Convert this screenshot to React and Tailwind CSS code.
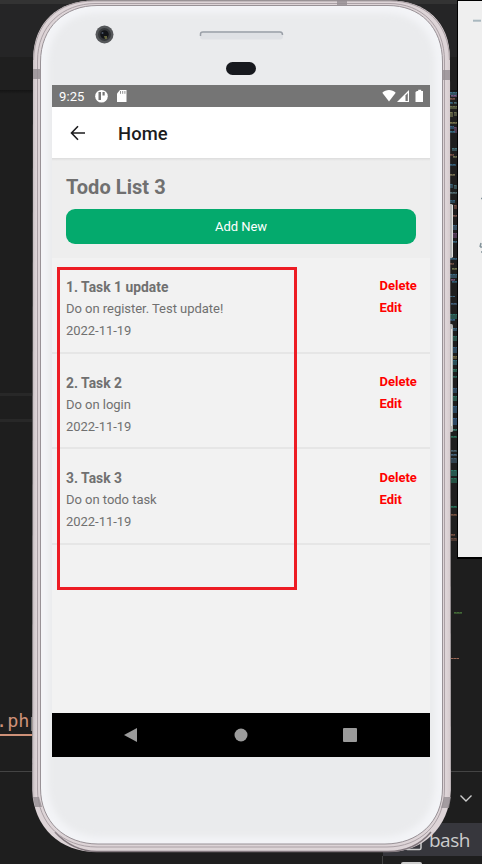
import React from "react";

const tasks = [
  { id: 1, title: "Task 1 update", note: "Do on register. Test update!", date: "2022-11-19" },
  { id: 2, title: "Task 2", note: "Do on login", date: "2022-11-19" },
  { id: 3, title: "Task 3", note: "Do on todo task", date: "2022-11-19" },
];

// Minimap rows of the editor: [x, y, width, height, colour]
const minimap = [
  [450, 92, 7, 3, "#3c6f83"], [451, 95, 6, 2, "#765a86"], [450, 98, 5, 2, "#765347"],
  [450, 102, 3, 2, "#386782"], [454, 102, 3, 2, "#4a6b73"], [450, 106, 7, 3, "#69704d"], [450, 112, 3, 5, "#777852"], [454, 112, 3, 4, "#686c50"],
  [450, 122, 7, 2, "#79764e"], [450, 126, 4, 3, "#355f82"], [454, 127, 3, 6, "#654a6b"], [450, 131, 5, 2, "#376b82"],
  [452, 148, 5, 3, "#456d75"], [450, 154, 4, 2, "#754e43"], [453, 156, 4, 2, "#707052"],
  [450, 164, 6, 2, "#35617d"], [450, 174, 5, 2, "#777051"], [450, 184, 3, 4, "#396378"], [454, 185, 3, 4, "#43676d"],
  [450, 192, 7, 2, "#536d73"], [450, 200, 5, 3, "#315d75"], [454, 205, 3, 4, "#734d43"], [453, 215, 4, 2, "#75534a"],
  [453, 225, 4, 5, "#41647d"], [453, 233, 4, 5, "#67466b"], [453, 241, 4, 2, "#3a657b"],
  [450, 258, 7, 2, "#356078"], [450, 263, 4, 2, "#715044"], [452, 268, 5, 2, "#6d714d"], [450, 274, 7, 4, "#3c6780"], [451, 279, 4, 2, "#745075"], [452, 281, 5, 2, "#315f76"],
  [450, 296, 5, 1, "#3e6680"], [451, 303, 6, 2, "#405d78"], [450, 314, 7, 5, "#2f7167"], [450, 319, 5, 2, "#356383"],
  [453, 328, 4, 3, "#3b647c"], [453, 336, 4, 5, "#2f6b60"], [453, 347, 4, 6, "#355e7b"], [453, 356, 4, 3, "#756b43"], [453, 360, 4, 5, "#316b7a"],
  [453, 369, 4, 3, "#2d725e"], [453, 376, 4, 2, "#2d665b"], [453, 388, 4, 5, "#355b78"], [453, 396, 4, 5, "#317564"],
  [453, 406, 4, 7, "#345f82"], [453, 418, 4, 7, "#37618a"], [453, 429, 4, 2, "#38796c"], [451, 436, 6, 2, "#2b7059"],
  [451, 450, 6, 2, "#48616f"], [451, 454, 6, 2, "#46627b"], [451, 458, 6, 5, "#3d586a"], [451, 470, 6, 6, "#2c7868"],
  [451, 478, 6, 5, "#286e58"], [451, 506, 6, 2, "#267058"], [451, 514, 6, 2, "#77513f"], [451, 534, 4, 2, "#795142"], [451, 538, 6, 3, "#65483d"],
  [454, 612, 8, 2, "#436b37"], [451, 658, 8, 1, "#9a6857"],
];

function Desktop() {
  return (
    <>
      <div className="absolute inset-0 flex flex-col bg-[#1e1e1e]">
        <div className="h-1 bg-[#333333]" />
        <div className="h-[53px] bg-[#252526]" />
        <div className="h-[33px] bg-[#1f1f1f]" />
        <div className="h-1 bg-gradient-to-b from-[#141414] to-[#1e1e1e]" />
        <div className="mt-[299px] h-[3px] w-8 bg-[#282828]" />
        <div className="mt-[23px] h-[3px] w-8 bg-[#282828]" />
        <div className="mt-[286px] h-[28px] w-12 border-b-2 border-[#ce9178] font-['DejaVu_Sans_Mono',monospace] text-[18.500px] leading-[26px] text-[#ce9178] whitespace-nowrap">
          <span className="-ml-[4px]">.php</span>
        </div>
        <div className="mt-[35px] h-px bg-[#444444]" />
        <div className="mt-[51px] ml-[383px] flex h-[33px] items-center bg-[#37373d] pt-px pl-[46px] font-['Open_Sans',sans-serif] text-[19px] tracking-[-0.500px] text-[#cccccc]">
          bash
        </div>
        <div className="ml-[382px] h-2 border-l border-[#444444]" />
      </div>
      <svg className="absolute inset-0" width="482" height="864" viewBox="0 0 482 864">
        {minimap.map(([x, y, w, h, c], i) => (
          <g key={i}>
            <rect x={x} y={y} width={w} height={h} fill={c} opacity=".65" />
            <path d={`M${x} ${y + 0.5}h${w}`} stroke={c} strokeDasharray="2 1" />
          </g>
        ))}
        <path d="M460.5 795.5l5.5 5.5 5.5-5.5" fill="none" stroke="#cccccc" strokeWidth="1.4" />
        <rect x="406" y="835" width="15" height="14.500" rx="1.5" fill="none" stroke="#cccccc" strokeWidth="1.5" />
        <rect x="401" y="862" width="21" height="8" rx="2" fill="#cccccc" />
      </svg>
      <div className="absolute top-0 left-[457px] h-[559px] w-10 border-2 border-t border-l border-black bg-[#efefef]">
        <svg width="24" height="556" viewBox="458 1 24 556">
          <path d="M473 20.7h8" stroke="#a9b8bf" strokeWidth="2" />
          <path d="M481 198.500h2M481 243l-1 4M480 247h3M481 252h2" stroke="#84949b" strokeWidth="1.500" />
        </svg>
      </div>
    </>
  );
}

function PhoneShell() {
  return (
    <svg className="absolute inset-0" width="482" height="864" viewBox="0 0 482 864">
      <defs>
        <linearGradient id="side" x1="32" x2="451" y1="0" y2="0" gradientUnits="userSpaceOnUse">
          <stop offset="0" stopColor="#918b8f" />
          <stop offset=".004" stopColor="#d0c7ca" />
          <stop offset=".011" stopColor="#ddd4d7" />
          <stop offset=".989" stopColor="#ddd4d7" />
          <stop offset=".997" stopColor="#d5cbce" />
          <stop offset="1" stopColor="#a9a1a5" />
        </linearGradient>
        <filter id="soft" x="-5%" y="-5%" width="110%" height="110%">
          <feGaussianBlur stdDeviation="3" />
        </filter>
        <clipPath id="face"><path d="M97 6H388C420 6 442 27 442 62V788C442 822 418 843.500 385 843.500H98C65 843.500 41 822 41 788V62C41 27 65 6 97 6Z" /></clipPath>
      </defs>
      <rect x="448" y="204" width="5" height="54" rx="1.500" fill="#b3b4b3" />
      <path d="M452.500 205v52" stroke="#e0e1df" />
      <rect x="448" y="324" width="5" height="108" rx="1.500" fill="#b3b4b3" />
      <path d="M451.500 329v97" stroke="#e0e1df" />
      <path d="M94 .5H390C426 .5 449.500 22 450 58L451 790C449 828 423 852 388 852H97C60 852 34 828 32 790L33 58C34 22 58 .5 94 .5Z" fill="url(#side)" />
      <path d="M55 832C67 845 80 851.500 97 851.500H388C405 851.500 420 845 431 832" fill="none" stroke="#81777d" strokeWidth="1.500" />
      <path d="M33.500 60C34.500 23 58 1 94 1H390C425 1 449 23 449.500 60" fill="none" stroke="#aaa0a4" />
      <path d="M96 3.500H389C422 3.500 444.500 26 444.500 61V789C444.500 824 420 847 387 847H97C63 847 37.500 824 37.500 789V61C37.500 26 62 3.500 96 3.500Z" fill="none" stroke="#aba1a6" />
      <path d="M97 5.500H388C420 5.500 442.500 27 442.500 62V788C442.500 822 418 844 385 844H98C65 844 40.500 822 40.500 788V62C40.500 27 65 5.500 97 5.500Z" fill="#f3f4f7" stroke="#989196" />
      <g clipPath="url(#face)">
        <path d="M98 13H384C415 13 435 33 435 64V783C435 815 414 837 382 837H100C69 837 48 815 48 783V64C48 33 68 13 98 13Z" fill="#eaebed" filter="url(#soft)" />
      </g>
      <path d="M33 69h7v10h-7zM443 70h7v10h-7zM337 0h10v5h-10zM33 797h6l3 10h-7zM444 797h7l-2 11h-8z" fill="#958d92" opacity=".8" />
      <circle cx="104.500" cy="34.500" r="9" fill="#55575a" />
      <circle cx="104.500" cy="34.500" r="6.500" fill="#36383b" />
      <circle cx="104.500" cy="34.500" r="4.200" fill="#121418" />
      <path d="M104 36h3v3h-2z" fill="#64643c" />
      <circle cx="102.500" cy="33" r="1" fill="#4c5668" />
      <rect x="200" y="31" width="83" height="8.500" rx="3" fill="#dfe1e5" />
      <path d="M200.500 36V34Q200.500 32 203 32H280Q282.500 32 282.500 35" fill="none" stroke="#9ba0a8" strokeWidth="1.500" />
      <rect x="226" y="62" width="30" height="13" rx="6.500" fill="#17191e" />
    </svg>
  );
}

function StatusBar() {
  return (
    <div className="flex h-[22px] shrink-0 items-center bg-[#757575] pl-[7px] text-white">
      <span className="w-[36px] pt-px text-[13px] leading-[22px] tracking-[0.1px]">9:25</span>
      <svg width="335" height="22" viewBox="95 85 335 22" fill="#fff">
        <circle cx="101.500" cy="96.200" r="6.300" />
        <path d="M98.500 92h2.500v8h-2.500zM102.500 92h2.200v3.500h-2.200z" fill="#757575" />
        <path d="M120 90H126.500V102H117V93.500Z" />
        <path d="M120.500 91v2.800M122.700 91v2.800M124.900 91v2.800" stroke="#757575" strokeWidth=".8" />
        <path d="M382.300 92.800C386 89 392 89 395.700 92.800L389 101.500Z" />
        <path d="M397 102L409 90V102Z" />
        <path d="M405.500 95.500L407.800 93V101H405.500Z" fill="#757575" />
        <path d="M417 91h1.200v-1.200h3V91H423V102H415.500V92Z" />
      </svg>
    </div>
  );
}

function Screen() {
  return (
    <div className="absolute top-[85px] left-[52px] flex h-[672px] w-[378px] flex-col bg-[#f2f2f2] font-[Roboto,sans-serif] text-[#707070]">
      <StatusBar />
      <header className="flex h-[51px] shrink-0 items-center bg-white pl-[18px] text-[#1c1c1e]">
        <svg width="16" height="16" viewBox="0 0 16 16" fill="none" stroke="currentColor" strokeWidth="1.600">
          <path d="M15 8H2M8 1.300L1.500 8L8 14.700" />
        </svg>
        <h1 className="ml-8 pt-[2px] text-[18.400px] font-medium leading-6 tracking-[0.100px] whitespace-nowrap">Home</h1>
      </header>
      <section className="flex h-[100px] shrink-0 flex-col bg-[#eeeeee] px-[14px]">
        <div className="-mx-[14px] h-[3px] shrink-0 bg-gradient-to-b from-[#dcdcdc] to-[#eeeeee]" />
        <h2 className="mt-[13px] text-[20px] font-bold leading-[26px] tracking-[0.050px] whitespace-nowrap">Todo List 3</h2>
        <button className="mt-[9px] h-[35px] w-[350px] shrink-0 rounded-[9px] bg-[#04aa6d] pt-px text-[13px] tracking-[-0.030px] text-white">Add New</button>
      </section>
      <main className="flex flex-1 flex-col">
        {tasks.map((t) => (
          <article key={t.id} className="flex h-[95.600px] justify-between border-b-2 border-[#e6e6e6] pr-[13px] pl-[14px] text-[13px] leading-[22px] tracking-[-0.030px] whitespace-nowrap">
            <div className="pt-[18px]">
              <h3 className="text-[13.800px] font-bold tracking-[0.030px]">{t.id}. {t.title}</h3>
              <p>{t.note}</p>
              <p>{t.date}</p>
            </div>
            <div className="w-[37.500px] pt-[17.400px] font-bold tracking-normal text-[#ff0000]">
              <p>Delete</p>
              <p>Edit</p>
            </div>
          </article>
        ))}
      </main>
      <nav className="h-11 shrink-0 bg-black">
        <svg width="378" height="44" viewBox="52 713 378 44" fill="#9b9b9b">
          <path d="M124 735L137 728V742Z" />
          <circle cx="241" cy="735" r="6.500" />
          <rect x="343" y="728" width="14" height="14" rx="1" />
        </svg>
      </nav>
    </div>
  );
}

export default function App() {
  return (
    <div className="relative h-[864px] w-[482px] overflow-hidden">
      <Desktop />
      <PhoneShell />
      <Screen />
      <div className="absolute top-[267px] left-[57px] h-[323px] w-[240px] border-3 border-[#ed1c24]" />
    </div>
  );
}
